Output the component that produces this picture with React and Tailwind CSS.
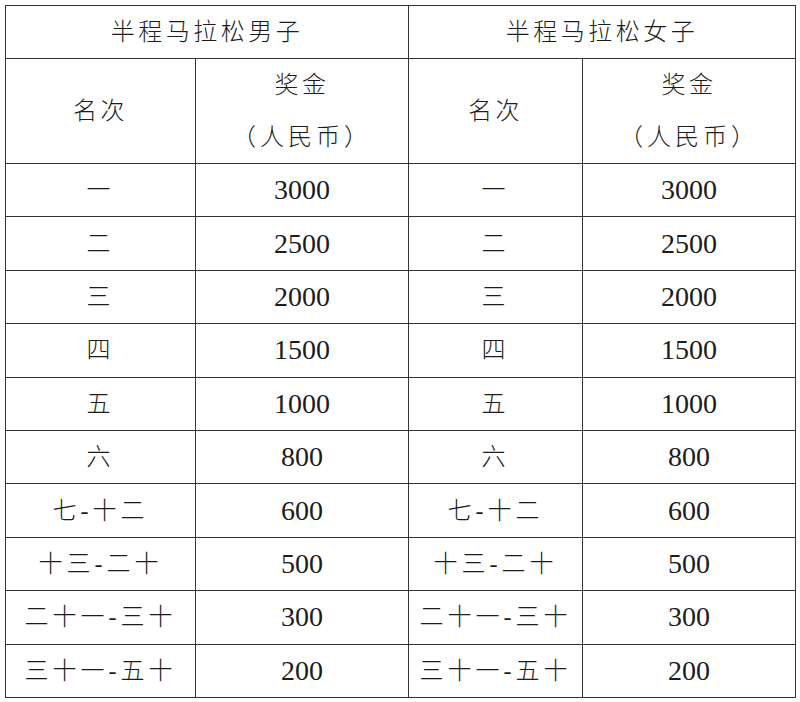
import { Fragment } from "react";

const rows = [
  ["一", "3000"],
  ["二", "2500"],
  ["三", "2000"],
  ["四", "1500"],
  ["五", "1000"],
  ["六", "800"],
  ["七-十二", "600"],
  ["十三-二十", "500"],
  ["二十一-三十", "300"],
  ["三十一-五十", "200"],
];

const cell = "border border-[#333] text-center align-middle p-0";

const App = () => {
  return (
    <div className="bg-white w-[800px] h-[702px] pt-[5px] pl-[5px] font-['Liberation_Serif','Noto_Sans_CJK_SC',serif] text-[#1c1c1c]">
      <table className="table-fixed border-collapse w-[790px]">
        <colgroup>
          <col className="w-[190px]" />
          <col className="w-[213px]" />
          <col className="w-[174px]" />
          <col className="w-[213px]" />
        </colgroup>
        <tbody>
          <tr className="h-[53px]">
            <td colSpan={2} className={`${cell} text-[24px] tracking-[3.5px] font-light`}>半程马拉松男子</td>
            <td colSpan={2} className={`${cell} text-[24px] tracking-[3.5px] font-light`}>半程马拉松女子</td>
          </tr>
          <tr className="h-[105px]">
            {[0, 1].map((i) => (
              <Fragment key={i}>
                <td className={`${cell} text-[24px] tracking-[3.5px] font-light`}>名次</td>
                <td className={`${cell} text-[24px] font-light leading-[52px]`}>
                  <div className="tracking-[3.5px]">奖金</div>
                  <div className="tracking-[4px]">（人民币）</div>
                </td>
              </Fragment>
            ))}
          </tr>
          {rows.map(([rank, prize], idx) => (
            <tr key={idx} className="h-[53.4px]">
              <td className={`${cell} text-[24px] tracking-[4px] font-light`}>{rank}</td>
              <td className={`${cell} text-[28px]`}>{prize}</td>
              <td className={`${cell} text-[24px] tracking-[4px] font-light`}>{rank}</td>
              <td className={`${cell} text-[28px]`}>{prize}</td>
            </tr>
          ))}
        </tbody>
      </table>
    </div>
  );
};

export default App;
